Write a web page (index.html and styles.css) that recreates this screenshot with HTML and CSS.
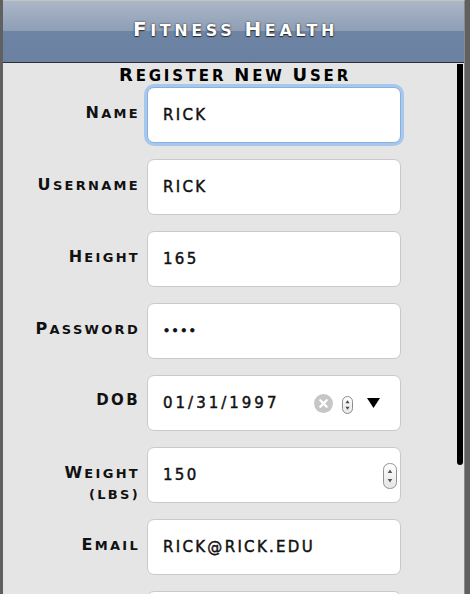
FILE: index.html
```html
<!DOCTYPE html>
<html lang="en">
<head>
<meta charset="utf-8">
<title>Fitness Health</title>
<link rel="stylesheet" href="styles.css">
</head>
<body class="frame">
<div class="app">
  <header class="topbar">
    <h1 class="brand"><span class="initial">F</span>itness <span class="initial">H</span>ealth</h1>
  </header>
  <main class="content">
    <h2 class="form-title"><span class="initial">R</span>egister <span class="initial">N</span>ew <span class="initial">U</span>ser</h2>
    <form class="form">
      <label class="label" for="name">Name</label>
      <div class="field field--focused"><input class="input" id="name" type="text" value="Rick"></div>

      <label class="label" for="username">Username</label>
      <div class="field"><input class="input" id="username" type="text" value="rick"></div>

      <label class="label" for="height">Height</label>
      <div class="field"><input class="input" id="height" type="text" value="165"></div>

      <label class="label" for="password">Password</label>
      <div class="field"><input class="input input--secret" id="password" type="password" value="rick"></div>

      <label class="label label--abbr" for="dob">DOB</label>
      <div class="field field--date">
        <input class="input input--date" id="dob" type="text" value="01/31/1997">
        <svg class="icon-clear" viewBox="0 0 19 19" width="19" height="19" aria-hidden="true"><circle cx="9.5" cy="9.5" r="9.5" fill="#c6c6c6"/><path d="M6.3 6.3L12.7 12.7M12.7 6.3L6.3 12.7" stroke="#fff" stroke-width="2.3" stroke-linecap="round"/></svg>
        <svg class="icon-stepper" viewBox="0 0 11 18" width="11" height="18" aria-hidden="true"><defs><linearGradient id="sg1" x1="0" y1="0" x2="0" y2="1"><stop offset="0" stop-color="#ffffff"/><stop offset="1" stop-color="#e6e6e6"/></linearGradient></defs><rect x="0.5" y="0.5" width="10" height="17" rx="5" fill="url(#sg1)" stroke="#8c8c8c"/><path d="M5.5 4.2L7.6 7.2H3.4Z M5.5 13.8L7.6 10.8H3.4Z" fill="#4a4a4a"/></svg>
        <svg class="icon-drop" viewBox="0 0 13 10" width="13" height="10" aria-hidden="true"><path d="M0 0H13L6.5 10Z" fill="#000"/></svg>
      </div>

      <label class="label" for="weight">Weight<br>(lbs)</label>
      <div class="field field--number">
        <input class="input" id="weight" type="text" value="150">
        <svg class="icon-spin" viewBox="0 0 14 26" width="14" height="26" aria-hidden="true"><defs><linearGradient id="sg2" x1="0" y1="0" x2="0" y2="1"><stop offset="0" stop-color="#ffffff"/><stop offset="1" stop-color="#e4e4e4"/></linearGradient></defs><rect x="0.5" y="0.5" width="13" height="25" rx="6" fill="url(#sg2)" stroke="#929292"/><path d="M7 6.5L9.3 10H4.7Z M7 19.5L9.3 16H4.7Z" fill="#555"/></svg>
      </div>

      <label class="label" for="email">Email</label>
      <div class="field"><input class="input" id="email" type="text" value="rick@rick.edu"></div>

      <div class="field field--next"><input class="input" type="text" value="" aria-label="More"></div>
    </form>
    <div class="scrollbar"></div>
  </main>
</div>
</body>
</html>
```
FILE: styles.css
```css
html, body {
  height: 100%;
}

.frame {
  margin: 0;
  overflow: hidden;
  background: #606060;
  font-family: "DejaVu Sans", "Liberation Sans", sans-serif;
}

.app {
  margin: 0 5px 0 3px;
  height: 100%;
  box-sizing: border-box;
  border-top: 1px solid #c3c3c3;
  border-right: 1px solid #8a8a8a;
  display: flex;
  flex-direction: column;
  overflow: hidden;
}

.topbar {
  flex: none;
  height: 62px;
  box-sizing: border-box;
  padding-top: 16px;
  border-bottom: 1px solid #2d3036;
  background: linear-gradient(to bottom, #acb7c8 0, #8e9eb5 30px, #6e84a4 30px, #6b81a2 100%);
}

.brand {
  margin: 0;
  text-align: center;
  color: #fff;
  font-size: 16px;
  line-height: 24px;
  font-weight: bold;
  text-transform: uppercase;
  letter-spacing: 3.6px;
  padding-left: 4px;
  text-shadow: 0 0 2px rgba(0, 0, 0, 0.75), 0 1px 1px rgba(0, 0, 0, 0.6);
}

.brand .initial {
  font-size: 20px;
}

.content {
  flex: 1;
  position: relative;
  background: #e5e5e5;
  overflow: hidden;
}

.form-title {
  margin: 0;
  padding-top: 1px;
  padding-left: 3px;
  text-align: center;
  color: #000;
  font-size: 15px;
  line-height: 21px;
  font-weight: bold;
  text-transform: uppercase;
  letter-spacing: 2.8px;
}

.form-title .initial {
  font-size: 18px;
}

.form {
  display: grid;
  grid-template-columns: 137px 254px;
  grid-auto-rows: 56px;
  column-gap: 7px;
  row-gap: 16px;
  margin-top: 0;
}

.label {
  padding-top: 15px;
  text-align: right;
  color: #111;
  font-size: 13px;
  line-height: 21px;
  font-weight: bold;
  text-transform: uppercase;
  letter-spacing: 2.3px;
}

.label::first-letter {
  font-size: 16px;
}

.label--abbr {
  padding-top: 15px;
  font-size: 15px;
  letter-spacing: 2.4px;
}

.label--abbr::first-letter {
  font-size: 15px;
}

.field {
  display: flex;
  align-items: center;
  height: 56px;
  box-sizing: border-box;
  padding: 0 15px;
  background: #fff;
  border: 1px solid #c9c9c9;
  border-radius: 7px;
}

.field--next {
  grid-column: 2;
}

.field--focused {
  border-color: #86b0de;
  box-shadow: 0 0 0 3px #a7c8ec;
}

.field--date {
  padding-right: 20px;
}

.field--number {
  padding-right: 3px;
}

.input {
  flex: 1;
  min-width: 0;
  margin: 0;
  padding: 0;
  border: 0;
  outline: none;
  background: transparent;
  color: #111;
  font-family: "DejaVu Sans", "Liberation Sans", sans-serif;
  font-size: 15px;
  text-transform: uppercase;
  letter-spacing: 2.3px;
  -webkit-text-stroke: 0.45px #111;
}

.input--date {
  letter-spacing: 3px;
}

.input--secret {
  font-size: 12px;
  letter-spacing: 1.5px;
  -webkit-text-stroke: 0.8px #111;
}

.icon-clear {
  flex: none;
  display: block;
}

.icon-stepper {
  flex: none;
  display: block;
  margin-left: 9px;
  margin-top: 4px;
}

.icon-drop {
  flex: none;
  display: block;
  margin-left: 14px;
}

.icon-spin {
  flex: none;
  display: block;
  margin-top: 2px;
}

.scrollbar {
  position: absolute;
  top: 1px;
  right: 1px;
  width: 6px;
  height: 401px;
  background: #000;
  border-radius: 0 0 3px 3px;
}
```
